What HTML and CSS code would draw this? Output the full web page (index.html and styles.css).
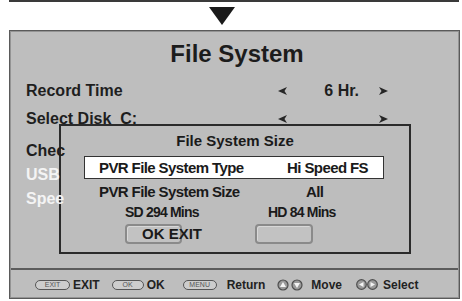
FILE: index.html
```html
<!DOCTYPE html>
<html>
<head>
<meta charset="utf-8">
<link rel="stylesheet" href="styles.css">
</head>
<body>
<div class="page">
  <div class="topline"></div>
  <div class="down-arrow"></div>
  <div class="panel">
    <div class="title">File System</div>
    <div class="rows">
      <div class="row">
        <span class="label">Record Time</span>
        <svg class="arr" viewBox="0 0 9 8" width="9" height="8"><path d="M0 4 L9 0 L6.5 4 L9 8 Z"/></svg>
        <span class="value">6 Hr.</span>
        <svg class="arr" viewBox="0 0 9 8" width="9" height="8"><path d="M9 4 L0 0 L2.5 4 L0 8 Z"/></svg>
      </div>
      <div class="row">
        <span class="label">Select Disk  C:</span>
        <svg class="arr" viewBox="0 0 9 8" width="9" height="8"><path d="M0 4 L9 0 L6.5 4 L9 8 Z"/></svg>
        <span class="value"></span>
        <svg class="arr" viewBox="0 0 9 8" width="9" height="8"><path d="M9 4 L0 0 L2.5 4 L0 8 Z"/></svg>
      </div>
      <div class="row short first-short"><span class="label over">Chec</span></div>
      <div class="row short"><span class="label over light">USB</span></div>
      <div class="row short"><span class="label over light">Spee</span></div>
    </div>

    <div class="dialog">
      <div class="dlg-title">File System Size</div>
      <div class="dlg-sel"><span>PVR File System Type</span><span>Hi Speed FS</span></div>
      <div class="dlg-row size"><span class="c1">PVR File System Size</span><span class="c2">All</span></div>
      <div class="dlg-row mins"><span class="c1">SD 294 Mins</span><span class="c2">HD 84 Mins</span></div>
      <div class="dlg-row btns"><span class="btn b1">OK EXIT</span><span class="btn b2"></span></div>
    </div>

    <div class="footer">
      <div class="fitem i1"><span class="key k-exit">EXIT</span><span>EXIT</span></div>
      <div class="fitem i2"><span class="key k-ok">OK</span><span>OK</span></div>
      <div class="fitem i3"><span class="key k-menu">MENU</span><span>Return</span></div>
      <div class="fitem i4">
        <svg width="26" height="12" viewBox="0 0 26 12">
          <circle cx="6" cy="6" r="5" class="ring"/>
          <path d="M6 3 L9 8 L3 8 Z" class="tri"/>
          <circle cx="20" cy="6" r="5" class="ring"/>
          <path d="M20 9 L23 4 L17 4 Z" class="tri"/>
        </svg>
        <span>Move</span>
      </div>
      <div class="fitem i5">
        <svg width="22" height="11" viewBox="0 0 22 11">
          <circle cx="5.5" cy="5.5" r="4.8" class="ring"/>
          <path d="M3 5.5 L7.5 3 L7.5 8 Z" class="tri"/>
          <circle cx="16.5" cy="5.5" r="4.8" class="ring"/>
          <path d="M19 5.5 L14.5 3 L14.5 8 Z" class="tri"/>
        </svg>
        <span>Select</span>
      </div>
    </div>
  </div>
</div>
</body>
</html>
```

FILE: styles.css
```css
html, body {
  margin: 0;
  padding: 0;
  background: #ffffff;
}

.page {
  width: 462px;
  height: 301px;
  box-sizing: border-box;
  padding-left: 9px;
  font-family: "Liberation Sans", Arial, sans-serif;
  color: #1e1e1e;
  overflow: hidden;
}

.topline {
  width: 450px;
  height: 2px;
  background: #3a3a3a;
}

.down-arrow {
  width: 0;
  height: 0;
  margin-top: 5px;
  margin-left: 200px;
  border-top: 18px solid #1a1a1a;
  border-left: 13px solid transparent;
  border-right: 13px solid transparent;
}

.panel {
  position: relative;
  margin-top: 5px;
  width: 451px;
  height: 269px;
  box-sizing: border-box;
  border: 1px solid #5a5a5a;
  box-shadow: inset 0 0 0 1px #949494;
  padding: 1px;
  background: #bebebe;
  display: flex;
  flex-direction: column;
}

.title {
  margin-top: 8px;
  height: 28px;
  line-height: 28px;
  font-size: 24px;
  font-weight: bold;
  text-align: center;
  padding-left: 5px;
  color: #1c1c1c;
}

.rows {
  margin-top: 9px;
  padding-left: 15px;
}

.row {
  display: grid;
  grid-template-columns: 252px 9px 92px 9px;
  align-items: center;
  height: 28px;
  line-height: 28px;
  font-size: 16px;
  font-weight: bold;
}

.row.short {
  height: 24px;
  line-height: 24px;
}

.row.first-short {
  margin-top: 6px;
}

.label {
  white-space: pre;
}

.label.over {
  position: relative;
  z-index: 2;
}

.label.light {
  color: #f4f4f4;
}

.value {
  text-align: right;
  padding-right: 20px;
}

.arr {
  display: block;
  fill: #262626;
}

.dialog {
  position: absolute;
  z-index: 1;
  left: 49px;
  top: 93px;
  width: 352px;
  height: 130px;
  box-sizing: border-box;
  border: 2px solid #2b2b2b;
  background: #bdbdbd;
  display: flex;
  flex-direction: column;
  color: #1a1a1a;
  font-weight: bold;
}

.dlg-title {
  margin-top: 5px;
  line-height: 20px;
  font-size: 15px;
  text-align: center;
}

.dlg-sel {
  margin: 5px 0 0 23px;
  width: 300px;
  height: 23px;
  box-sizing: border-box;
  border: 1px solid #333333;
  background: #ffffff;
  display: flex;
  justify-content: space-between;
  padding: 0 15px 0 14px;
  line-height: 21px;
  font-size: 15px;
  letter-spacing: -0.6px;
}

.dlg-row {
  display: grid;
  grid-template-columns: 150px 150px;
  margin-left: 23px;
  white-space: nowrap;
}

.dlg-row.size {
  margin-top: 4px;
  line-height: 18px;
  font-size: 15px;
  letter-spacing: -0.6px;
}

.dlg-row.size .c1 { padding-left: 15px; }
.dlg-row.size .c2 { padding-left: 72px; }

.dlg-row.mins {
  margin-top: 2px;
  line-height: 18px;
  font-size: 14px;
  letter-spacing: -0.8px;
}

.dlg-row.mins .c1 { padding-left: 41px; }
.dlg-row.mins .c2 { padding-left: 34px; }

.dlg-row.btns {
  margin-top: 3px;
  height: 20px;
}

.btn {
  justify-self: start;
  height: 20px;
  box-sizing: border-box;
  border: 2px solid #8a8a8a;
  border-radius: 4px;
  background: #c2c2c2;
  box-shadow: inset 1px 1px 0 #d8d8d8;
  font-size: 15px;
  line-height: 16px;
  padding-left: 15px;
  white-space: nowrap;
}

.btn.b1 { margin-left: 41px; width: 57px; }
.btn.b2 { margin-left: 21px; width: 58px; }

.footer {
  margin-top: auto;
  height: 29px;
  box-sizing: border-box;
  border-top: 2px solid #5c5c5c;
  padding-top: 2px;
  padding-left: 24px;
  display: flex;
  align-items: center;
  font-size: 12px;
  font-weight: bold;
  color: #222222;
}

.fitem {
  display: flex;
  align-items: center;
  gap: 3px;
}

.fitem.i1 { margin-right: 12px; }
.fitem.i2 { margin-right: 18px; }
.fitem.i3 { margin-right: 12px; gap: 10px; }
.fitem.i4 { margin-right: 14px; gap: 8px; }
.fitem.i5 { gap: 5px; }

.key {
  display: inline-flex;
  align-items: center;
  justify-content: center;
  height: 10px;
  box-sizing: border-box;
  border: 1.5px solid #555555;
  border-radius: 5px;
  background: #cdcdcd;
  font-size: 7px;
  font-weight: normal;
  color: #555555;
  line-height: 1;
}

.k-exit { width: 35px; }
.k-ok { width: 32px; }
.k-menu { width: 34px; }

.ring {
  fill: #9a9a9a;
  stroke: #4e4e4e;
  stroke-width: 1.2;
}

.tri {
  fill: #f4f4f4;
}
```
